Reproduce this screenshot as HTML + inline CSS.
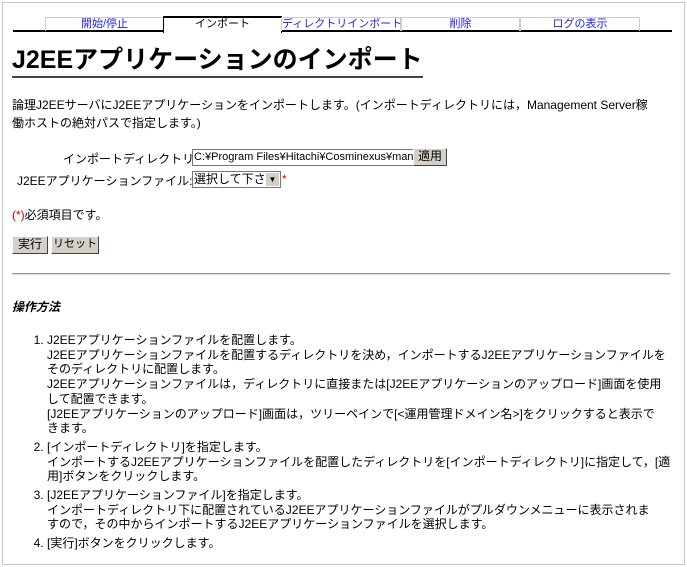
<!DOCTYPE html>
<html><head><meta charset="utf-8"><style>
body{margin:0;background:#fff;font-family:"Liberation Sans","Noto Sans CJK JP",sans-serif;font-size:12px;color:#000;}
.frame{position:absolute;left:2px;top:2px;width:681px;height:561px;border:1px solid #c8c8c8;}
.tabs{position:absolute;left:13px;top:16px;width:659px;height:14px;border-bottom:2px solid #000;}
.tab{position:absolute;top:1px;height:13px;border:1px solid #ccc;border-bottom:none;text-align:center;color:#2222ee;font-size:11px;line-height:13px;white-space:nowrap;overflow:hidden;}
.tab.act{top:0;border:1px solid #000;border-top:2px solid #000;border-bottom:none;color:#000;background:#fff;height:15px;}
h1{position:absolute;left:12px;top:44px;margin:0;font-size:25px;font-weight:bold;line-height:32px;border-bottom:2px solid #444;white-space:nowrap;}
.t{position:absolute;white-space:nowrap;}
.inp{position:absolute;border:1px solid #777;background:#fff;font-size:11px;height:15px;line-height:15px;padding-left:1px;overflow:hidden;white-space:nowrap;}
.btn{position:absolute;background:#d4d0c8;border:1px solid;border-color:#fff #404040 #404040 #fff;font-size:12px;text-align:center;line-height:15px;height:16px;white-space:nowrap;}
hr{position:absolute;left:12px;top:273px;width:658px;margin:0;border:none;border-top:1px solid #999;border-bottom:1px solid #ddd;}
ol{position:absolute;left:8px;top:333px;margin:0;padding-left:39px;line-height:14.7px;white-space:nowrap;font-size:12px;}
li{margin-bottom:4px;}
</style></head><body>
<div class="frame"></div>
<div class="tabs">
<div class="tab" style="left:32px;width:117px">開始/停止</div>
<div class="tab act" style="left:150px;width:117px">インポート</div>
<div class="tab" style="left:268px;width:118px">ディレクトリインポート</div>
<div class="tab" style="left:388px;width:117px">削除</div>
<div class="tab" style="left:507px;width:118px">ログの表示</div>
</div>
<h1>J2EEアプリケーションのインポート</h1>
<div class="t" style="left:12px;top:96px;line-height:18px">論理J2EEサーバにJ2EEアプリケーションをインポートします。(インポートディレクトリには，Management Server稼<br>働ホストの絶対パスで指定します。)</div>
<div class="t" style="left:63px;top:150px">インポートディレクトリ:</div>
<div class="inp" style="left:192px;top:149px;width:219px">C:¥Program Files¥Hitachi¥Cosminexus¥mana</div>
<div class="btn" style="left:413px;top:148px;width:32px">適用</div>
<div class="t" style="left:17px;top:172px">J2EEアプリケーションファイル:</div>
<div class="inp" style="left:192px;top:171px;width:86px;font-size:12px">選択して下さい<span style="position:absolute;right:1px;top:1px;width:13px;height:13px;background:#d4d0c8;font-size:8px;text-align:center;line-height:13px">▼</span></div>
<div class="t" style="left:282px;top:172px;color:#e00">*</div>
<div class="t" style="left:12px;top:206px"><span style="color:#c00">(*)</span>必須項目です。</div>
<div class="btn" style="left:12px;top:236px;width:34px">実行</div>
<div class="btn" style="left:51px;top:236px;width:46px;font-size:11px">リセット</div>
<hr>
<div class="t" style="left:12px;top:298px;font-weight:bold;font-style:italic">操作方法</div>
<ol>
<li>J2EEアプリケーションファイルを配置します。<br>J2EEアプリケーションファイルを配置するディレクトリを決め，インポートするJ2EEアプリケーションファイルを<br>そのディレクトリに配置します。<br>J2EEアプリケーションファイルは，ディレクトリに直接または[J2EEアプリケーションのアップロード]画面を使用<br>して配置できます。<br>[J2EEアプリケーションのアップロード]画面は，ツリーペインで[&lt;運用管理ドメイン名&gt;]をクリックすると表示で<br>きます。</li>
<li>[インポートディレクトリ]を指定します。<br>インポートするJ2EEアプリケーションファイルを配置したディレクトリを[インポートディレクトリ]に指定して，[適<br>用]ボタンをクリックします。</li>
<li>[J2EEアプリケーションファイル]を指定します。<br>インポートディレクトリ下に配置されているJ2EEアプリケーションファイルがプルダウンメニューに表示されま<br>すので，その中からインポートするJ2EEアプリケーションファイルを選択します。</li>
<li>[実行]ボタンをクリックします。</li>
</ol>
</body></html>
